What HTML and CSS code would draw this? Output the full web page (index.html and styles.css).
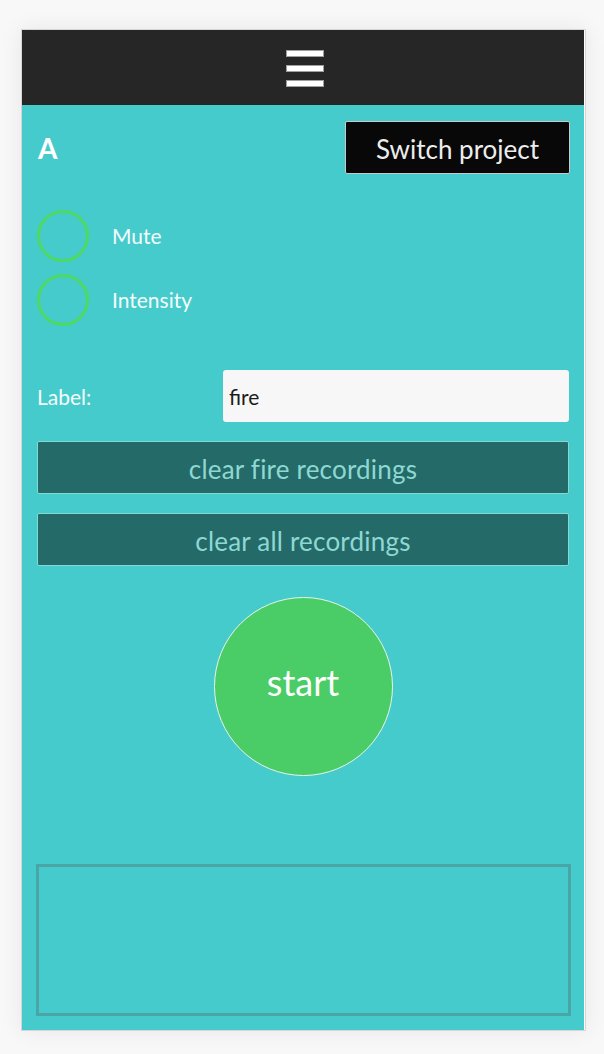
FILE: index.html
```html
<!DOCTYPE html>
<html lang="en">
<head>
<meta charset="utf-8">
<title>Recorder</title>
<link rel="stylesheet" href="styles.css">
</head>
<body>
<div class="frame">
  <div class="app">
    <header class="topbar">
      <div class="burger" aria-label="menu">
        <span class="bar"></span>
        <span class="bar"></span>
        <span class="bar"></span>
      </div>
    </header>
    <main class="content">
      <div class="project-row">
        <span class="project-name">A</span>
        <button class="switch-btn">Switch project</button>
      </div>
      <div class="toggles">
        <div class="toggle"><span class="ring"></span><span class="toggle-label">Mute</span></div>
        <div class="toggle"><span class="ring"></span><span class="toggle-label">Intensity</span></div>
      </div>
      <div class="label-row">
        <span class="label-text">Label:</span>
        <input class="label-input" type="text" value="fire">
      </div>
      <button class="dark-btn first">clear fire recordings</button>
      <button class="dark-btn">clear all recordings</button>
      <div class="start-wrap">
        <button class="start-btn">start</button>
      </div>
      <div class="log-box"></div>
    </main>
  </div>
</div>
</body>
</html>
```

FILE: styles.css
```css
html, body {
  margin: 0;
  padding: 0;
}
body {
  background: #f8f8f8;
  font-family: Lato, "Open Sans", sans-serif;
  padding: 29px 0 0 21px;
  height: 1054px;
  box-sizing: border-box;
}
.frame {
  width: 563px;
  border: 1px solid #d6d6d6;
  background: #ffffff;
  box-shadow: 0 0 22px rgba(0, 0, 0, 0.07);
}
.app {
  width: 562px;
  height: 1000px;
  background: #46cbcc;
  display: flex;
  flex-direction: column;
}
.topbar {
  height: 75px;
  background: #262626;
  display: flex;
  align-items: center;
  justify-content: center;
  flex: none;
}
.burger {
  display: flex;
  flex-direction: column;
  gap: 10px;
  margin-left: 3px;
  margin-top: 1px;
}
.bar {
  display: block;
  width: 36px;
  height: 5px;
  background: #ffffff;
  box-shadow: 0 0 0 1px rgba(200, 200, 200, 0.75);
}
.content {
  padding: 16px 15px 0;
  display: flex;
  flex-direction: column;
}
.project-row {
  display: flex;
  justify-content: space-between;
  align-items: center;
  height: 52px;
}
.project-name {
  color: #ffffff;
  font-weight: bold;
  font-size: 28px;
  margin-left: 1px;
  margin-top: 2px;
}
.switch-btn {
  width: 225px;
  height: 53px;
  background: #080808;
  color: #ededed;
  border: 1px solid #c9c9c9;
  border-radius: 2px;
  font-family: Lato, sans-serif;
  font-size: 26px;
  padding: 3px 0 0;
  margin-right: -1px;
}
.toggles {
  margin-top: 37px;
  display: flex;
  flex-direction: column;
  gap: 12px;
}
.toggle {
  display: flex;
  align-items: center;
  height: 52px;
}
.ring {
  width: 46px;
  height: 46px;
  border: 3px solid #4cd964;
  border-radius: 50%;
  flex: none;
}
.toggle-label {
  margin-left: 23px;
  margin-bottom: 2px;
  color: #f4fbfb;
  font-size: 21px;
}
.label-row {
  margin-top: 44px;
  display: flex;
  align-items: center;
  height: 52px;
}
.label-text {
  width: 186px;
  color: #f4fbfb;
  font-size: 21px;
  flex: none;
}
.label-input {
  flex: 1;
  height: 52px;
  box-sizing: border-box;
  border: none;
  border-radius: 3px;
  background: #f7f7f7;
  padding: 0 6px;
  font-family: Lato, sans-serif;
  font-size: 21px;
  color: #1c1c1c;
  outline: none;
}
.dark-btn {
  margin-top: 19px;
  height: 53px;
  width: 100%;
  background: #246a68;
  color: #8ed8d3;
  border: 1px solid #84d9d5;
  border-radius: 2px;
  font-family: Lato, sans-serif;
  font-size: 26px;
  letter-spacing: 0.2px;
  padding: 2px 0 0;
}
.start-wrap {
  margin-top: 31px;
  display: flex;
  justify-content: center;
}
.start-btn {
  width: 179px;
  height: 179px;
  border-radius: 50%;
  background: #4acd66;
  border: 1px solid #e6f5ea;
  color: #ffffff;
  font-family: Lato, sans-serif;
  font-size: 36px;
  padding: 0 0 10px;
}
.log-box {
  margin: 88px -2px 0 -1px;
  height: 152px;
  box-sizing: border-box;
  border: 3px solid rgba(80, 120, 120, 0.45);
}
```
